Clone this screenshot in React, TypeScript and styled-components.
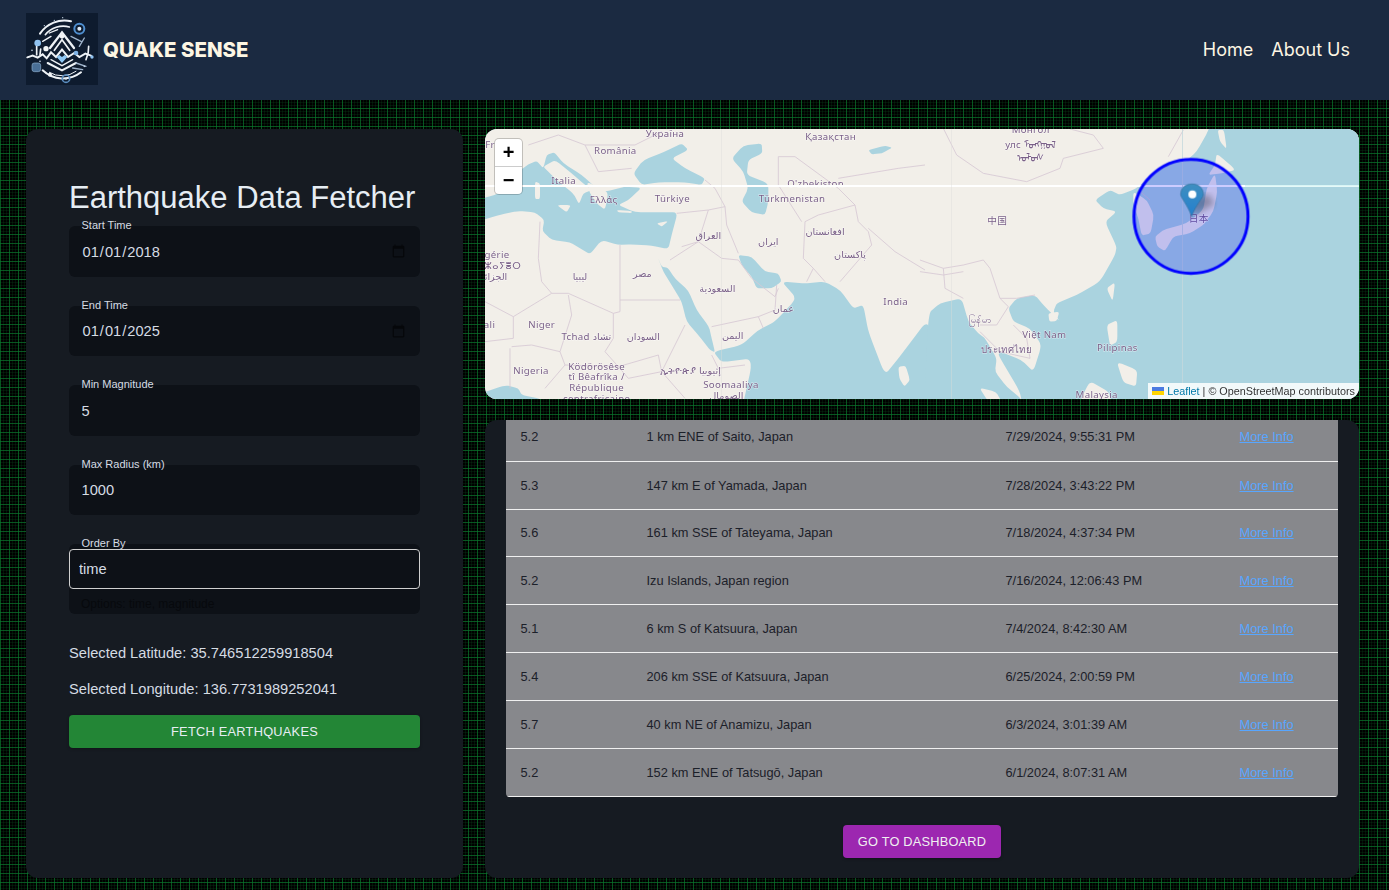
import styled, { createGlobalStyle } from 'styled-components';

const GlobalStyle = createGlobalStyle`
  html, body {
    margin: 0;
    padding: 0;
    overflow: hidden;
    background: #000;
    font-family: "Liberation Sans", Arial, sans-serif;
  }
`;

const Page = styled.div`
  width: 1389px;
  height: 890px;
  background-color: #000;
  background-image:
    linear-gradient(rgba(10, 120, 45, 0.65) 1px, transparent 1px),
    linear-gradient(90deg, rgba(10, 120, 45, 0.65) 1px, transparent 1px),
    linear-gradient(rgba(10, 90, 35, 0.22) 1px, transparent 1px),
    linear-gradient(90deg, rgba(10, 90, 35, 0.22) 1px, transparent 1px);
  background-size: 9px 9px, 9px 9px, 3px 3px, 3px 3px;
`;

const Header = styled.header`
  height: 100px;
  background: #1b2a41;
  display: flex;
  align-items: center;
  justify-content: space-between;
  padding: 0 39px 2px 26px;
  box-sizing: border-box;
`;

const Brand = styled.div`
  display: flex;
  align-items: center;
  gap: 5px;
`;

const BrandName = styled.span`
  font-family: Inter, sans-serif;
  font-weight: 800;
  font-size: 20.4px;
  color: #fdf6e3;
`;

const Nav = styled.nav`
  display: flex;
  gap: 18px;
`;

const NavLink = styled.a`
  font-family: Inter, sans-serif;
  font-size: 18px;
  color: #fdf6e3;
`;

const Main = styled.main`
  display: grid;
  grid-template-columns: 437px 874px;
  gap: 22px;
  padding: 29px 0 0 26px;
`;

const FormPanel = styled.section`
  height: 749px;
  box-sizing: border-box;
  background: #161b22;
  border-radius: 12px;
  padding: 50px 43px 0;
`;

const Title = styled.h1`
  margin: 0 0 10.4px;
  font-size: 31px;
  line-height: 37px;
  font-weight: 400;
  color: #e6edf3;
  white-space: nowrap;
`;

const Fields = styled.div`
  display: flex;
  flex-direction: column;
  gap: 29.1px;
`;

const Field = styled.div<{ $tall?: boolean }>`
  position: relative;
  height: ${p => (p.$tall ? '70px' : '50.4px')};
  background: #0d1117;
  border-radius: 6px;
  ${p => p.$tall && 'padding-top: 5px; box-sizing: border-box;'}
`;

const FieldLabel = styled.label`
  position: absolute;
  left: 12.5px;
  top: -7px;
  font-size: 11px;
  line-height: 13px;
  color: #d5dce4;
  z-index: 1;
`;

const Input = styled.input`
  width: 100%;
  height: 100%;
  box-sizing: border-box;
  background: transparent;
  border: none;
  outline: none;
  padding: 0 12px 0 12.5px;
  font-family: "Liberation Sans", Arial, sans-serif;
  font-size: 14.67px;
  color: #d5dce4;

  &::-webkit-calendar-picker-indicator {
    opacity: 0.55;
  }
`;

const OrderInput = styled.input`
  display: block;
  width: 100%;
  height: 40px;
  box-sizing: border-box;
  background: #0d1117;
  border: 1px solid #d0d0d0;
  border-radius: 4px;
  outline: none;
  padding: 0 9px 1px;
  font-family: "Liberation Sans", Arial, sans-serif;
  font-size: 14.67px;
  color: #d5dce4;
`;

const Helper = styled.div`
  padding: 8px 12px 0;
  font-size: 12px;
  line-height: 14px;
  color: #07090d;
`;

const Selected = styled.p`
  margin: 18px 0 0;
  font-size: 14.67px;
  line-height: 18px;
  color: #d5dce4;
  &:first-of-type {
    margin-top: 29.5px;
  }
`;

const FetchButton = styled.button`
  display: block;
  width: 100%;
  height: 33px;
  margin-top: 17px;
  border: none;
  border-radius: 4px;
  background: #238636;
  color: #e6edf3;
  font-family: "Liberation Sans", Arial, sans-serif;
  font-size: 12.8px;
  letter-spacing: 0.25px;
  text-transform: uppercase;
  box-shadow: 0 1px 3px rgba(0, 0, 0, 0.3);
`;

const RightColumn = styled.div`
  display: flex;
  flex-direction: column;
  gap: 21px;
`;

const MapBox = styled.div`
  position: relative;
  height: 270px;
  border-radius: 12px;
  overflow: hidden;
  background: #aad3df;
`;

const MapSvg = styled.svg`
  display: block;
  width: 874px;
  height: 270px;
`;

const ZoomBar = styled.div`
  position: absolute;
  left: 10px;
  top: 10px;
  width: 27px;
  background: #fff;
  border-radius: 4px;
  box-shadow: 0 0 0 1px rgba(0, 0, 0, 0.2);
`;

const ZoomButton = styled.div<{ $last?: boolean }>`
  height: 27px;
  display: flex;
  align-items: center;
  justify-content: center;
  font-family: "Liberation Sans", Arial, sans-serif;
  font-weight: 700;
  font-size: 20px;
  color: #000;
  ${p => !p.$last && 'border-bottom: 1px solid #ccc;'}
`;

const Attribution = styled.div`
  position: absolute;
  right: 0;
  bottom: 0;
  display: flex;
  align-items: center;
  gap: 3px;
  height: 16px;
  padding: 0 4px 1px;
  box-sizing: border-box;
  background: rgba(255, 255, 255, 0.85);
  font-size: 10.8px;
  color: #333;
  white-space: pre;
`;

const AttributionLink = styled.a`
  color: #0078a8;
`;

const ResultsCard = styled.section`
  height: 458px;
  box-sizing: border-box;
  background: #161b22;
  border-radius: 12px;
  padding: 0 21px;
  display: flex;
  flex-direction: column;
  align-items: center;
`;

const TableClip = styled.div`
  width: 100%;
  height: 377px;
  overflow: hidden;
  background: #87888c;
  border-radius: 0 0 4px 4px;
`;

const Table = styled.table`
  width: 100%;
  margin-top: -6.7px;
  border-collapse: collapse;
  table-layout: fixed;
  font-size: 12.8px;
  color: #1c2029;
`;

const Row = styled.tr`
  height: 47.85px;
  border-bottom: 1px solid #f0f0f0;
`;

const Cell = styled.td<{ $w: number }>`
  width: ${p => p.$w}px;
  padding: 0 0 0 14.5px;
  box-sizing: border-box;
`;

const MoreLink = styled.a`
  color: #58a6ff;
  text-decoration: underline;
`;

const DashboardButton = styled.button`
  margin-top: 28px;
  width: 158px;
  height: 33px;
  border: none;
  border-radius: 4px;
  background: #9c27b0;
  color: #f0f0f0;
  font-family: "Liberation Sans", Arial, sans-serif;
  font-size: 12.8px;
  letter-spacing: 0.2px;
  text-transform: uppercase;
  box-shadow: 0 1px 3px rgba(0, 0, 0, 0.3);
`;

const MapLabel = styled.text`
  font-family: "Noto Sans", "DejaVu Sans", "Noto Sans CJK SC", sans-serif;
  font-size: 29px;
  letter-spacing: 1px;
  fill: #7a6088;
  stroke: rgba(255, 255, 255, 0.55);
  stroke-width: 3px;
  paint-order: stroke;
  text-anchor: middle;
`;

const rows = [
  ['5.2', '1 km ENE of Saito, Japan', '7/29/2024, 9:55:31 PM'],
  ['5.3', '147 km E of Yamada, Japan', '7/28/2024, 3:43:22 PM'],
  ['5.6', '161 km SSE of Tateyama, Japan', '7/18/2024, 4:37:34 PM'],
  ['5.2', 'Izu Islands, Japan region', '7/16/2024, 12:06:43 PM'],
  ['5.1', '6 km S of Katsuura, Japan', '7/4/2024, 8:42:30 AM'],
  ['5.4', '206 km SSE of Katsuura, Japan', '6/25/2024, 2:00:59 PM'],
  ['5.7', '40 km NE of Anamizu, Japan', '6/3/2024, 3:01:39 AM'],
  ['5.2', '152 km ENE of Tatsugō, Japan', '6/1/2024, 8:07:31 AM'],
];

const WATER = '#aad3df';
const LAND = '#f2efe9';
const BORDER = '#d6c8d4';

// softens the corners of a closed polygon, keeps the outline where it is
function smooth(d: string) {
  const pts = (d.match(/-?\d+,-?\d+/g) || []).map(s => s.split(',').map(Number));
  const at = (a: number[], b: number[], t: number) => `${a[0] + (b[0] - a[0]) * t},${a[1] + (b[1] - a[1]) * t}`;
  let out = '';
  pts.forEach((p, i) => {
    const prev = pts[(i - 1 + pts.length) % pts.length];
    const next = pts[(i + 1) % pts.length];
    out += `${i ? ' L' : 'M'}${at(p, prev, 0.25)} Q${p[0]},${p[1]} ${at(p, next, 0.25)}`;
  });
  return out + ' Z';
}

// coordinates are 3x map pixels
const westWater = [
  'M-40,228 L30,210 L70,185 L100,140 L130,118 L155,108 L175,130 L185,90 L208,82 L235,115 L290,150 L335,190 L360,200 L420,185 L470,188 L430,225 L400,240 L450,262 L520,262 L578,262 L560,330 L550,372 L500,362 L440,358 L400,360 L350,345 L315,388 L285,370 L255,352 L200,345 L172,318 L178,285 L150,262 L100,258 L50,268 L-40,295 Z',
  'M445,145 L475,105 L540,80 L590,55 L610,75 L560,100 L600,130 L660,160 L650,180 L600,172 L520,172 L470,180 Z',
  'M740,100 L775,62 L830,55 L832,85 L790,105 L785,150 L850,175 L850,230 L840,270 L800,262 L770,230 L790,190 L775,140 Z',
  'M517,393 L530,425 L548,428 L570,460 L610,497 L635,555 L672,605 L680,640 L690,682 L675,675 L640,630 L605,590 L590,530 L560,480 L535,440 Z',
  'M760,390 L800,395 L840,440 L880,445 L890,470 L860,490 L815,490 L800,455 L770,420 Z',
  'M685,680 L770,660 L820,615 L870,590 L935,520 L890,470 L960,475 L1020,470 L1065,495 L1105,550 L1135,540 L1150,620 L1200,750 L1240,700 L1335,575 L1380,900 L760,900 L805,700 L710,712 Z',
  'M-40,815 L60,780 L100,790 L110,810 L170,822 L180,880 L-40,880 Z',
  'M1150,75 L1200,62 L1222,68 L1190,85 L1160,88 Z',
];

const westLand = [
  'M175,125 L210,105 L260,145 L300,180 L322,195 L295,205 L282,238 L265,205 L220,170 L190,140 Z',
  'M215,240 L258,240 L245,262 Z',
  'M150,170 L165,175 L165,222 L150,222 Z',
  'M305,170 L370,200 L360,255 L335,235 L315,205 Z',
  'M395,255 L440,258 L440,264 L400,262 Z',
  'M515,295 L550,288 L530,305 Z',
  'M1240,725 L1262,722 L1275,765 L1258,785 L1243,760 Z',
];

const westBorders = [
  'M165,290 L160,400 L170,470 L200,505 L85,575 L0,530',
  'M405,360 L405,560 L385,565 L250,505 L200,505',
  'M405,525 L585,525',
  'M385,565 L385,640 L360,680 L400,725 L520,690 L530,740 L600,600',
  'M250,510 L260,570 L225,680',
  'M80,665 L140,660 L225,680 L240,720 L180,790',
  'M85,575 L85,640 L0,650',
  'M75,670 L75,790',
  'M240,720 L400,725 L430,760 L530,740 L600,820',
  'M680,690 L700,730 L780,720',
  'M555,405 L640,350 L710,400 L760,405 L800,460 L870,515 L880,490',
  'M680,605 L820,575 L835,610',
  'M820,575 L870,555 L875,480',
  'M590,365 L640,350 L670,255',
  'M575,265 L670,255 L720,245 L725,300 L760,385',
  'M960,290 L955,400 L985,430 L965,470',
  'M960,290 L1000,270 L1110,240 L1120,290 L1150,320 L1160,360 L1065,470',
  'M985,430 L1020,470',
  'M880,95 L880,180 L950,290',
  'M880,95 L930,95 L1060,190 L1110,240',
  'M1060,160 L1240,130 L1320,120',
  'M1150,310 L1230,380 L1320,435',
  'M300,60 L450,60 L530,20',
  'M130,60 L220,30 L300,60 L340,140 L440,130',
  'M720,245 L690,190 L660,165',
];

const eastWater = [
  'M25,565 L60,535 L125,520 L145,590 L175,625 L195,640 L230,700 L225,740 L260,785 L305,822 L330,900 L10,900 Z',
  'M880,-60 L868,12 L830,80 L795,110 L745,110 L725,130 L650,190 L600,210 L570,195 L525,225 L550,250 L590,260 L555,290 L590,365 L585,390 L540,470 L470,510 L410,535 L400,560 L420,590 L370,540 L345,510 L290,520 L265,550 L280,590 L330,610 L365,660 L340,740 L305,705 L240,680 L235,690 L300,800 L310,860 L1400,900 L1400,-60 Z',
];

const eastLand = [
  'M640,200 L680,225 L702,270 L692,325 L665,332 L655,280 L640,240 Z',
  'M705,335 L730,315 L800,295 L850,255 L860,190 L885,145 L892,200 L880,260 L850,300 L810,325 L760,335 L735,378 L712,365 Z',
  'M890,85 L948,135 L905,145 L865,150 L885,120 Z',
  'M893,15 L912,15 L920,72 L900,50 Z',
  'M560,490 L585,472 L578,530 Z',
  'M385,565 L418,560 L410,588 L388,590 Z',
  'M560,600 L592,585 L592,650 L570,662 Z',
  'M590,710 L652,735 L648,785 L610,772 Z',
  'M478,830 L510,768 L565,800 L575,830 Z',
  'M178,788 L228,800 L245,830 L205,830 Z',
];

const eastBorders = [
  'M70,10 L110,90 L190,145 L320,170 L420,130 L430,100 L550,70 L520,30 L450,12',
  'M745,95 L790,15',
  'M0,405 L70,430 L130,420 L190,405 L210,430 L240,520 L290,520 L345,510',
  'M70,430 L75,490 L130,520',
  'M240,520 L265,545 L230,600 L180,600',
  'M180,620 L240,680 L330,700 L320,640 L280,600',
  'M0,440 L70,450 L130,440',
  'M650,190 L690,225',
];

const westLabels: [string, number, number][] = [
  ['Україна', 540, 36], ['Қазақстан', 1037, 44], ['România', 391, 88], ['Italia', 236, 178],
  ['Ελλάς', 356, 235], ['Türkiye', 562, 230], ["O'zbekiston", 992, 186], ['Türkmenistan', 921, 232],
  ['العراق', 670, 343], ['ایران', 850, 360], ['افغانستان', 1020, 330], ['پاکستان', 1095, 398],
  ['Algérie', 22, 400], ['ⵍⵣⵣⴰⵢⴻⵔ', 30, 432], ['الجزائر', 25, 466], ['ليبيا', 285, 464],
  ['مصر', 472, 455], ['السعودية', 697, 500], ['عمان', 895, 560], ['India', 1232, 540],
  ['Mali', 0, 608], ['Niger', 170, 609], ['Tchad تشاد', 304, 644], ['السودان', 475, 644],
  ['اليمن', 743, 641], ['Nigeria', 138, 746], ['Ködörösêse', 335, 734], ['tî Bêafrîka /', 335, 766],
  ['République', 335, 798], ['centrafricaine', 335, 830], ['ኢትዮጵያ إثيوبيا', 617, 748],
  ['Soomaaliya', 738, 788], ['الصومال', 724, 822], ['Fr', 15, 68],
];

const eastLabels: [string, number, number][] = [
  ['Монгол', 332, 24], ['улс ᠮᠤᠩᠭᠤᠯ', 332, 68], ['ᠤᠯᠤᠰ', 332, 108], ['中国', 232, 296],
  ['မြန်မာ', 180, 593], ['Việt Nam', 373, 640], ['ประเทศไทย', 260, 683], ['Pilipinas', 592, 678],
  ['Malaysia', 530, 818],
];

function Shapes({ d, fill }: { d: string[]; fill: string }) {
  return (
    <>
      {d.map(path => (
        <path key={path} d={smooth(path)} fill={fill} />
      ))}
    </>
  );
}

function Lines({ d }: { d: string[] }) {
  return (
    <>
      {d.map(path => (
        <path key={path} d={path} fill="none" stroke={BORDER} strokeWidth={2.5} strokeLinejoin="round" />
      ))}
    </>
  );
}

function Labels({ items }: { items: [string, number, number][] }) {
  return (
    <>
      {items.map(([text, x, y]) => (
        <MapLabel key={text} x={x} y={y}>
          {text}
        </MapLabel>
      ))}
    </>
  );
}

function WorldMap() {
  return (
    <MapSvg viewBox="0 0 2622 810">
      <defs>
        <linearGradient id="pin" x1="0" y1="0" x2="0" y2="1">
          <stop offset="0" stopColor="#3f8fc0" />
          <stop offset="1" stopColor="#2380cf" />
        </linearGradient>
        <filter id="soft">
          <feGaussianBlur stdDeviation="0.9" />
        </filter>
        <filter id="pinShadow">
          <feGaussianBlur stdDeviation="10" />
        </filter>
      </defs>
      <rect width="2622" height="810" fill={LAND} />
      <g filter="url(#soft)">
        <g transform="translate(0,-12)">
          <Shapes d={westWater} fill={WATER} />
          <Shapes d={westLand} fill={LAND} />
          <Lines d={westBorders} />
          <Labels items={westLabels} />
        </g>
        <g transform="translate(1305,-12)">
          <Shapes d={eastWater} fill={WATER} />
          <Shapes d={eastLand} fill={LAND} />
          <Lines d={eastBorders} />
          <Labels items={eastLabels} />
          <MapLabel x={836} y={290}>日本</MapLabel>
        </g>
      </g>
      {/* tile seams */}
      <rect x="0" y="168" width="2622" height="5" fill="#ffffff" />
      <rect x="2280" y="168" width="342" height="5" fill="#d8f5f5" />
      <rect x="709" y="0" width="2" height="810" fill="#dcdcd8" opacity="0.6" />
      <rect x="1399" y="0" width="2" height="810" fill="#dcdcd8" opacity="0.6" />
      <rect x="2091" y="0" width="2" height="810" fill="#c4d8dc" opacity="0.8" />
      {/* search radius */}
      <circle cx="2118" cy="262" r="171" fill="#0000ff" fillOpacity="0.2" stroke="#0000ff" strokeWidth="9" />
      {/* marker */}
      <path d="M2120,262 L2190,225 L2170,195 L2130,205 Z" fill="#000" opacity="0.28" filter="url(#pinShadow)" />
      <path
        d="M2120,262 C2108,228 2087,205 2087,197 C2087,176 2102,165 2121,165 C2140,165 2155,176 2155,197 C2155,205 2132,228 2120,262 Z"
        fill="url(#pin)"
        stroke="#2e6c97"
        strokeWidth="2"
      />
      <circle cx="2122" cy="196" r="12" fill="#fff" />
    </MapSvg>
  );
}

function Logo() {
  return (
    <svg width="72" height="72" viewBox="0 0 216 216">
      <rect width="216" height="216" fill="#0e1b2e" />
      <g fill="none" stroke="#eef2f6" strokeLinecap="round">
        <path d="M42,62 A88,88 0 0 1 135,25" strokeWidth="6" />
        <path d="M58,65 A70,70 0 0 1 130,42" strokeWidth="5" />
        <path d="M50,172 A88,88 0 0 0 165,178" strokeWidth="6" />
        <path d="M70,178 A72,72 0 0 0 150,175" strokeWidth="3" />
        <path d="M188,100 A88,88 0 0 1 180,140" strokeWidth="5" />
        <path d="M4,133 L20,128 L35,134 L50,124 L62,136 L75,118 L90,132 L108,110 L126,132 L145,120 L160,132 L178,122 L195,128" strokeWidth="6" />
        <path d="M72,105 L108,58 L144,105" strokeWidth="7" />
        <path d="M85,112 L108,80 L131,112" strokeWidth="5" />
        <path d="M65,150 L108,172 L150,150" strokeWidth="6" />
        <path d="M75,140 L108,158 L140,140" strokeWidth="4" />
        <path d="M32,125 L32,98 M42,125 L44,108" strokeWidth="5" />
        <path d="M160,100 L175,75 M135,70 L165,85" strokeWidth="4" stroke="#9fb4cc" />
        <path d="M150,150 L180,160 M140,165 L170,170" strokeWidth="4" stroke="#9fb4cc" />
        <path d="M70,60 L95,50 M50,85 L75,70" strokeWidth="4" />
      </g>
      <circle cx="160" cy="47" r="15" fill="none" stroke="#4f8fd0" strokeWidth="6" />
      <circle cx="160" cy="47" r="6" fill="#dfeaf5" />
      <circle cx="35" cy="90" r="10" fill="#8fc2f0" />
      <circle cx="60" cy="107" r="8" fill="#f4f6f8" />
      <circle cx="108" cy="70" r="7" fill="#f4f6f8" />
      <circle cx="150" cy="120" r="7" fill="#7fb2e4" />
      <circle cx="198" cy="132" r="5" fill="#8fc2f0" />
      <path d="M108,150 L92,132 L100,126 L108,132 L116,126 L124,132 Z" fill="#8fc8f5" />
      <rect x="18" y="150" width="26" height="26" rx="7" fill="#4a6f96" stroke="#8fb0d0" strokeWidth="2" />
      <circle cx="120" cy="197" r="11" fill="none" stroke="#5c8ec0" strokeWidth="5" />
      <circle cx="120" cy="197" r="3" fill="#dfeaf5" />
      <circle cx="72" cy="185" r="6" fill="#f4f6f8" />
      <g fill="#c8d8e8">
        <circle cx="55" cy="38" r="2" />
        <circle cx="85" cy="22" r="2" />
        <circle cx="110" cy="14" r="2" />
        <circle cx="18" cy="112" r="2.5" />
        <circle cx="175" cy="160" r="2.5" />
        <circle cx="42" cy="145" r="2.5" />
      </g>
    </svg>
  );
}

export default function App() {
  return (
    <>
      <GlobalStyle />
      <Page>
        <Header>
          <Brand>
            <Logo />
            <BrandName>QUAKE SENSE</BrandName>
          </Brand>
          <Nav>
            <NavLink>Home</NavLink>
            <NavLink>About Us</NavLink>
          </Nav>
        </Header>
        <Main>
          <FormPanel>
            <Title>Earthquake Data Fetcher</Title>
            <Fields>
              <Field>
                <FieldLabel>Start Time</FieldLabel>
                <Input type="date" defaultValue="2018-01-01" />
              </Field>
              <Field>
                <FieldLabel>End Time</FieldLabel>
                <Input type="date" defaultValue="2025-01-01" />
              </Field>
              <Field>
                <FieldLabel>Min Magnitude</FieldLabel>
                <Input type="number" defaultValue={5} />
              </Field>
              <Field>
                <FieldLabel>Max Radius (km)</FieldLabel>
                <Input type="number" defaultValue={1000} />
              </Field>
              <Field $tall>
                <FieldLabel>Order By</FieldLabel>
                <OrderInput type="text" defaultValue="time" />
                <Helper>Options: time, magnitude</Helper>
              </Field>
            </Fields>
            <Selected>Selected Latitude: 35.746512259918504</Selected>
            <Selected>Selected Longitude: 136.7731989252041</Selected>
            <FetchButton>Fetch Earthquakes</FetchButton>
          </FormPanel>
          <RightColumn>
            <MapBox>
              <WorldMap />
              <ZoomBar>
                <ZoomButton>+</ZoomButton>
                <ZoomButton $last>−</ZoomButton>
              </ZoomBar>
              <Attribution>
                <svg width="12" height="8" viewBox="0 0 12 8">
                  <rect width="12" height="4" fill="#4c7be1" />
                  <rect y="4" width="12" height="4" fill="#ffd500" />
                </svg>
                <span>
                  <AttributionLink>Leaflet</AttributionLink> | © OpenStreetMap contributors
                </span>
              </Attribution>
            </MapBox>
            <ResultsCard>
              <TableClip>
                <Table>
                  <tbody>
                    {rows.map(([mag, place, time]) => (
                      <Row key={time}>
                        <Cell $w={126}>{mag}</Cell>
                        <Cell $w={359}>{place}</Cell>
                        <Cell $w={234}>{time}</Cell>
                        <Cell $w={113}>
                          <MoreLink>More Info</MoreLink>
                        </Cell>
                      </Row>
                    ))}
                  </tbody>
                </Table>
              </TableClip>
              <DashboardButton>Go to Dashboard</DashboardButton>
            </ResultsCard>
          </RightColumn>
        </Main>
      </Page>
    </>
  );
}
